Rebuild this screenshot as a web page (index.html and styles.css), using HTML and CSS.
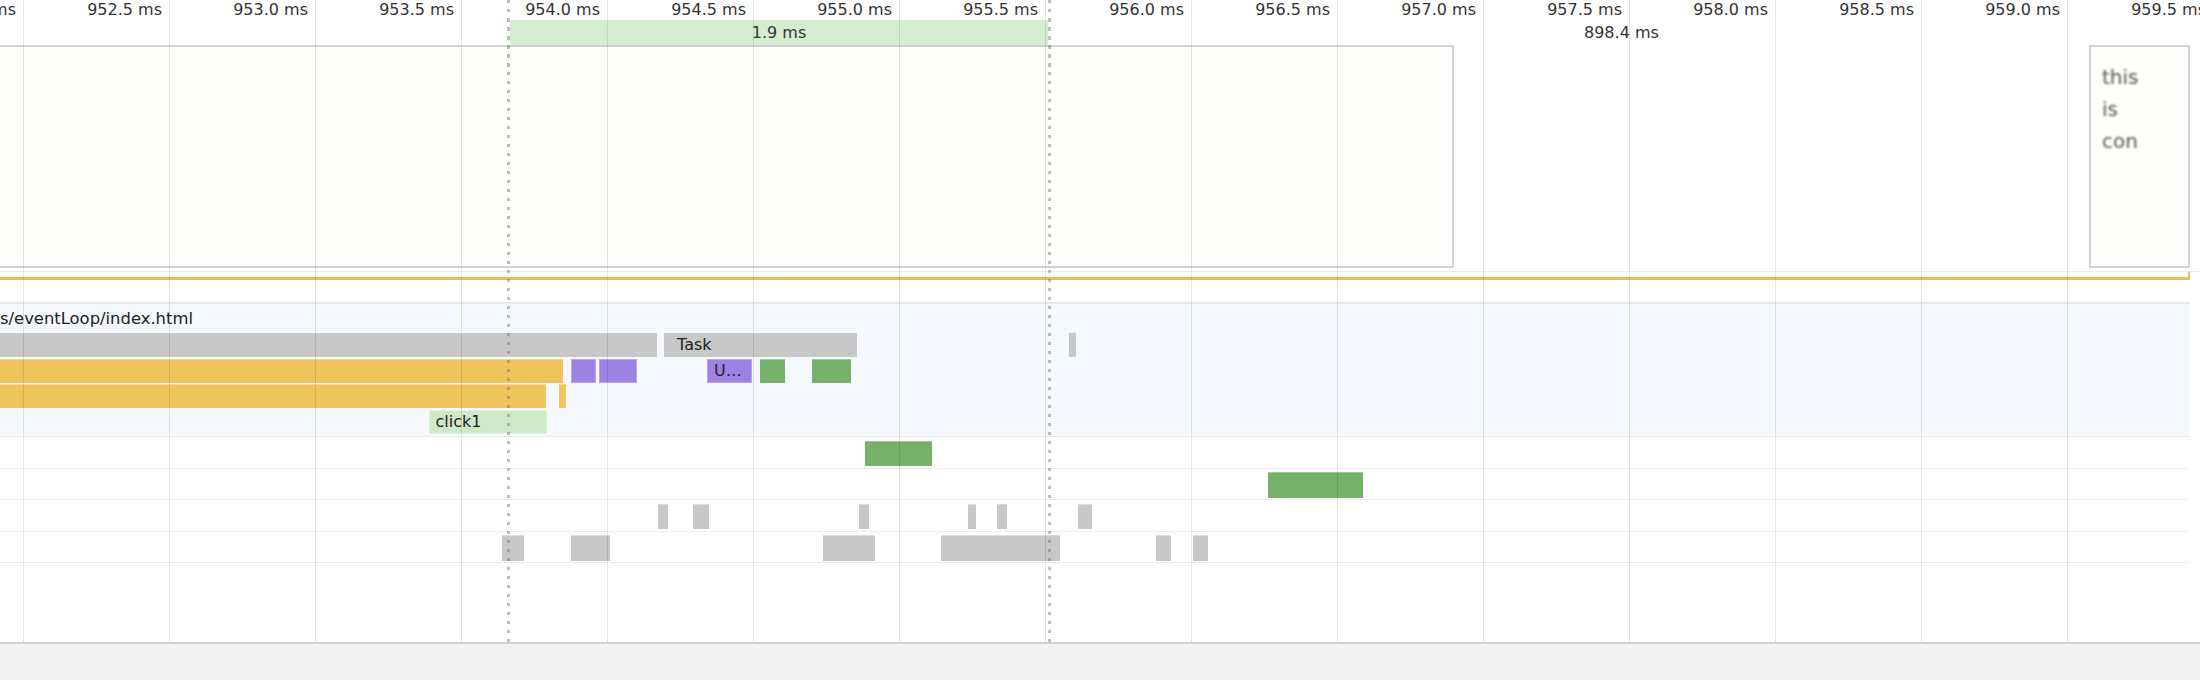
FILE: index.html
```html
<!DOCTYPE html>
<html lang="en">
<head>
<meta charset="utf-8">
<title>Performance timeline</title>
<link rel="stylesheet" href="styles.css">
</head>
<body>
<div class="panel">
  <div class="ruler">
    <div class="ticks">
      <div class="tick">952.0 ms</div>
      <div class="tick">952.5 ms</div>
      <div class="tick">953.0 ms</div>
      <div class="tick">953.5 ms</div>
      <div class="tick">954.0 ms</div>
      <div class="tick">954.5 ms</div>
      <div class="tick">955.0 ms</div>
      <div class="tick">955.5 ms</div>
      <div class="tick">956.0 ms</div>
      <div class="tick">956.5 ms</div>
      <div class="tick">957.0 ms</div>
      <div class="tick">957.5 ms</div>
      <div class="tick">958.0 ms</div>
      <div class="tick">958.5 ms</div>
      <div class="tick">959.0 ms</div>
      <div class="tick">959.5 ms</div>
    </div>
    <div class="markers">
      <div class="sel">1.9 ms</div>
      <div class="dur">898.4 ms</div>
    </div>
  </div>

  <div class="frames">
    <div class="frame frame-main"></div>
    <div class="frame frame-thumb"><div class="thumb-text">this<br>is<br>con</div></div>
  </div>

  <div class="fps-line"></div>

  <div class="main-track">
    <div class="track-title">s/eventLoop/index.html</div>
    <div class="flame-row">
      <div class="bar task" style="left:-10px;width:667px"></div>
      <div class="bar task" style="left:664px;width:4px"></div>
      <div class="bar task" style="left:670px;width:187px">Task</div>
      <div class="bar task" style="left:1069px;width:7px"></div>
    </div>
    <div class="flame-row">
      <div class="bar script" style="left:-10px;width:573px"></div>
      <div class="bar render" style="left:571px;width:25px"></div>
      <div class="bar render" style="left:599px;width:38px"></div>
      <div class="bar render" style="left:707px;width:45px">U…</div>
      <div class="bar paint" style="left:760px;width:25px"></div>
      <div class="bar paint" style="left:812px;width:39px"></div>
    </div>
    <div class="flame-row">
      <div class="bar script" style="left:-10px;width:556px"></div>
      <div class="bar script" style="left:559px;width:2.5px"></div>
    </div>
    <div class="flame-row">
      <div class="bar event" style="left:428.5px;width:118px">click1</div>
    </div>
  </div>

  <div class="lane">
    <div class="bar paint" style="left:865px;width:67px"></div>
  </div>
  <div class="lane">
    <div class="bar paint" style="left:1268px;width:95px"></div>
  </div>
  <div class="lane">
    <div class="bar task" style="left:658px;width:10px"></div>
    <div class="bar task" style="left:692.5px;width:16px"></div>
    <div class="bar task" style="left:858.5px;width:10.5px"></div>
    <div class="bar task" style="left:967.5px;width:8px"></div>
    <div class="bar task" style="left:996.5px;width:10px"></div>
    <div class="bar task" style="left:1078px;width:13.5px"></div>
  </div>
  <div class="lane">
    <div class="bar task" style="left:502px;width:22px"></div>
    <div class="bar task" style="left:571px;width:39px"></div>
    <div class="bar task" style="left:822.5px;width:52.5px"></div>
    <div class="bar task" style="left:941px;width:119px"></div>
    <div class="bar task" style="left:1156px;width:15px"></div>
    <div class="bar task" style="left:1192.5px;width:15.5px"></div>
  </div>

  <div class="grid">
    <div class="grid-cell"></div><div class="grid-cell"></div><div class="grid-cell"></div><div class="grid-cell"></div>
    <div class="grid-cell"></div><div class="grid-cell"></div><div class="grid-cell"></div><div class="grid-cell"></div>
    <div class="grid-cell"></div><div class="grid-cell"></div><div class="grid-cell"></div><div class="grid-cell"></div>
    <div class="grid-cell"></div><div class="grid-cell"></div><div class="grid-cell"></div><div class="grid-cell"></div>
  </div>
  <div class="dash dash-a"></div>
  <div class="dash dash-b"></div>
</div>
<div class="footer"></div>
</body>
</html>
```

FILE: styles.css
```css
* { box-sizing: border-box; }

html, body {
  margin: 0;
  padding: 0;
}

body {
  width: 2200px;
  height: 680px;
  overflow: hidden;
  background: #ffffff;
  font-family: "DejaVu Sans", "Liberation Sans", sans-serif;
  color: #333333;
}

.panel {
  position: relative;
  height: 644px;
  border-bottom: 2px solid #d0d0d0;
  overflow: hidden;
}

/* ---------- ruler ---------- */
.ruler {
  height: 45px;
  display: flex;
  flex-direction: column;
}

.ticks {
  display: flex;
  height: 19.5px;
  margin-left: -122px;
}

.tick {
  flex: 0 0 146px;
  text-align: right;
  padding-right: 8px;
  font-size: 16px;
  line-height: 19px;
  white-space: nowrap;
  color: #333333;
}

.markers {
  display: flex;
  height: 25.5px;
}

.sel {
  margin-left: 510px;
  width: 538px;
  background: #d5edd0;
  text-align: center;
  font-size: 16px;
  line-height: 25.5px;
  color: #333333;
}

.dur {
  margin-left: 536px;
  font-size: 16px;
  line-height: 25.5px;
  white-space: nowrap;
  color: #333333;
}

/* ---------- filmstrip ---------- */
.frames {
  display: flex;
  align-items: flex-start;
  height: 227px;
  border-bottom: 1px solid #ededed;
}

.frame {
  height: 223px;
  border: 2px solid #d2d2d2;
  background: #fefefc;
}

.frame-main {
  margin-left: -2px;
  width: 1456px;
}

.frame-thumb {
  margin-left: 635px;
  width: 101px;
  padding: 14px 0 0 11px;
}

.thumb-text {
  font-size: 20px;
  line-height: 32px;
  color: #555555;
  filter: blur(1.1px);
}

.fps-line {
  position: relative;
  width: 2190px;
  height: 2.5px;
  margin-top: 5px;
  background: #ebbc56;
}

.fps-line::after {
  content: "";
  position: absolute;
  right: 0;
  bottom: 0;
  width: 2px;
  height: 7.5px;
  background: #ebbc56;
}

/* ---------- main track ---------- */
.main-track {
  margin-top: 22.5px;
  width: 2190px;
  background: #f5f8fd;
  border-top: 2px solid #e9e9e9;
  border-bottom: 1.5px solid #e9e9e9;
  padding-bottom: 1px;
}

.track-title {
  height: 29px;
  font-size: 16.4px;
  line-height: 29px;
  color: #222222;
  white-space: nowrap;
}

.flame-row {
  position: relative;
  height: 25.5px;
}

.bar {
  position: absolute;
  top: 0;
  height: 24px;
  padding-left: 7px;
  font-size: 16px;
  line-height: 24px;
  color: #222222;
  white-space: nowrap;
  overflow: hidden;
}

.task { background: #c8c8c8; }
.script {
  background: #f0c35c;
  box-shadow: inset 0 1px 0 rgba(255, 255, 255, 0.35);
}
.render {
  background: #9c82e2;
  box-shadow: inset 0 0 0 1px rgba(255, 255, 255, 0.3);
}
.paint {
  background: #76b16a;
  box-shadow: inset 0 1px 0 rgba(255, 255, 255, 0.3);
}
.event {
  background: #cfe9c8;
  box-shadow: inset 0 0 0 1px rgba(255, 255, 255, 0.4);
}

/* ---------- lower lanes ---------- */
.lane {
  position: relative;
  width: 2190px;
  height: 31.5px;
  border-bottom: 1.5px solid #ececec;
}

.lane .bar {
  top: 3.5px;
  height: 25.5px;
}

.lane .task {
  box-shadow: inset 0 1px 0 rgba(255, 255, 255, 0.35);
}

/* ---------- overlays ---------- */
.grid {
  position: absolute;
  top: 0;
  bottom: 0;
  left: -122px;
  display: flex;
  pointer-events: none;
}

.grid-cell {
  flex: 0 0 146px;
  border-right: 1px solid rgba(0, 0, 0, 0.1);
}

.dash {
  position: absolute;
  top: 0;
  bottom: 0;
  width: 3px;
  pointer-events: none;
  background: repeating-linear-gradient(to bottom, rgba(100, 100, 100, 0.42) 0 3.5px, transparent 3.5px 9px);
}

.dash-a { left: 507px; }
.dash-b { left: 1048px; }

.footer {
  height: 36px;
  background: #f2f2f2;
}
```
